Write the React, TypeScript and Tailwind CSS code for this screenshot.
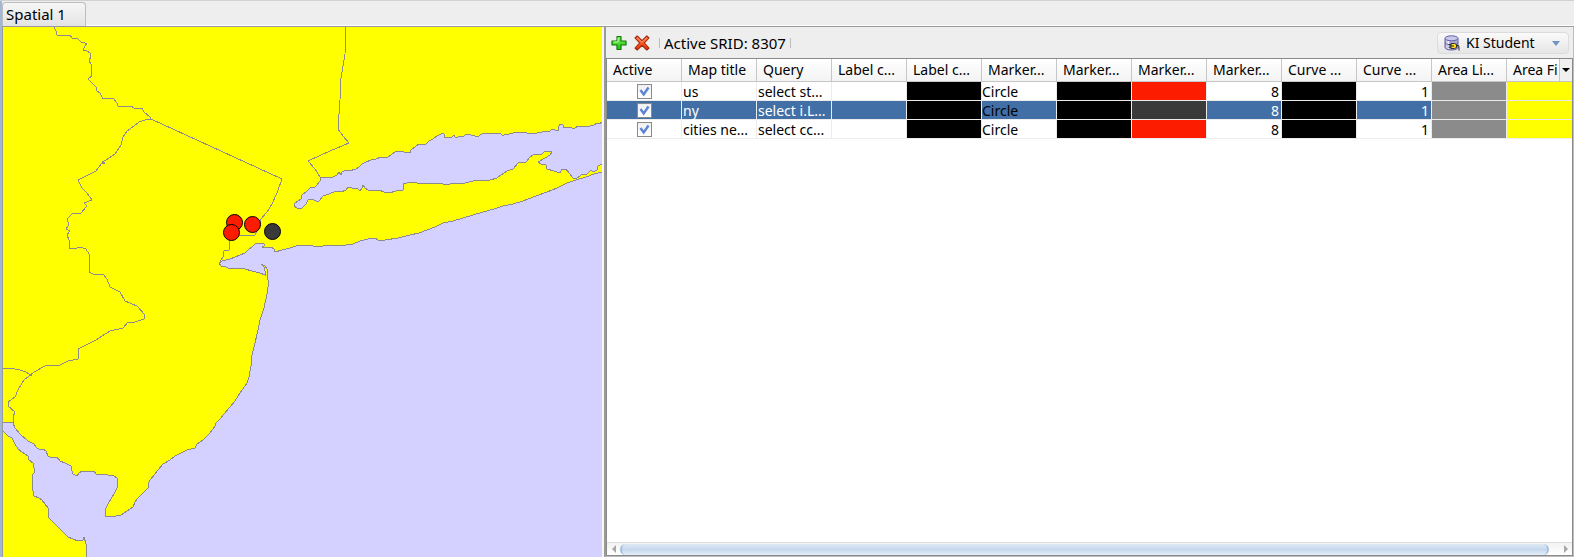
import { useState } from "react";

type Row = {
  title: string;
  query: string;
  markerFill: string;
};

const HEADERS = [
  "Active",
  "Map title",
  "Query",
  "Label c...",
  "Label c...",
  "Marker...",
  "Marker...",
  "Marker...",
  "Marker...",
  "Curve ...",
  "Curve ...",
  "Area Li...",
  "Area Fi",
];

const ROWS: Row[] = [
  { title: "us", query: "select st...", markerFill: "bg-[#fc1c00]" },
  { title: "ny", query: "select i.L...", markerFill: "bg-[#3a3a3a]" },
  { title: "cities ne...", query: "select cc...", markerFill: "bg-[#fc1c00]" },
];

const OCEAN =
  "610,169 602,172 594,174 586,177 576,180 567,183 557,188 547,192 536,196 523,201 513,204 503,206 494,209 483,212 473,215 463,218 453,221 443,223 435,227 427,230 419,233 410,235 398,238 385,240 378,240 375,238 368,239 360,241 353,244 340,246 334,245 323,246 313,246 303,245 296,246 290,248 282,250 275,252 274,249 271,247 267,248 262,247 264,246 264,244 261,243 256,243 252,247 248,250 245,253 240,255 230,259 222,261 219,263 221,266 226,267 230,269 233,268 239,268 245,269 252,271 260,273 265,275 265,271 264,267 261,264 265,266 267,269 268,280 268,287 267,294 264,308 260,320 258,330 255,343 252,355 251,366 249,377 247,383 240,393 235,401 230,407 224,414 220,419 216,423 215,426 210,433 203,440 197,444 195,448 187,450 181,453 175,456 170,460 163,464 158,470 155,474 150,480 148,484 148,488 143,493 138,498 135,502 133,507 127,511 121,515 116,516 111,517 105,516 106,508 109,502 114,494 117,488 117,478 114,476 108,475 96,474 94,471 89,471 82,471 79,473 77,476 73,474 72,471 71,466 65,463 60,461 57,457 53,457 52,458 48,456 46,451 43,449 41,450 37,448 34,444 28,441 20,434 15,428 13,423 11,422 0,422 0,429 4,432 8,436 12,438 15,444 18,449 22,452 28,456 29,460 33,463 34,468 35,472 32,475 32,485 34,496 39,498 42,500 48,508 48,517 56,525 68,537 73,539 78,541 83,540 84,537 86,544 87,557 87,1200 1200,1200 1200,169";

const SOUND =
  "610,120 602,122 599,124 597,123 594,125 590,126 585,126 578,126 575,128 572,128 568,127 563,128 563,125 560,124 559,126 558,131 555,130 552,129 550,131 547,131 537,133 533,133 528,134 526,132 519,132 516,132 513,133 509,134 508,135 505,134 503,136 501,134 495,133 485,133 482,134 480,135 478,137 475,136 474,135 472,136 470,134 468,135 466,134 464,136 459,136 458,137 455,137 454,135 452,137 447,138 444,137 445,135 443,133 441,134 437,136 433,139 429,141 426,144 419,144 415,147 411,150 410,153 404,152 398,151 395,152 391,155 388,157 381,157 376,159 371,160 366,162 362,164 359,167 356,169 349,171 346,170 342,172 341,175 339,172 337,175 333,177 326,177 321,178 320,181 317,185 315,187 311,187 307,191 302,195 301,199 298,201 295,203 294,206 297,208 302,208 306,204 308,200 312,199 316,201 319,201 323,196 329,194 336,191 341,192 346,190 348,187 352,188 358,189 360,191 362,188 363,185 365,188 368,190 379,190 384,192 389,193 396,191 403,190 403,184 407,183 410,182 417,183 430,183 443,184 450,184 465,183 473,181 478,180 483,181 490,180 497,178 501,175 507,171 513,169 518,163 526,162 530,157 535,154 541,155 545,151 552,152 550,155 545,158 538,162 541,164 546,165 547,169 554,171 560,173 562,169 566,169 569,173 573,178 576,179 580,176 582,174 587,174 591,170 593,172 597,170 598,166 602,164 610,162";

const BORDERS = [
  "346,27 345,54 341,78 340,100 338,129 343,136 349,143 330,151 319,156 308,161 315,169 320,177 320,180",
  "54,27 56,31 57,35 62,36 65,35 70,35 72,38 78,39 81,42 85,43 87,43 85,46 83,50 87,51 90,53 91,56 89,61 91,64 92,76 88,79 92,83 96,87 97,91 100,93 103,99 113,98 117,103 118,106 126,107 131,106 134,108 142,108 144,112 150,117 151,119 282,179 277,193 272,204 267,212 261,219 260,226 255,235 240,235 238,237 230,240 229,250 224,251 223,257 220,262",
  "151,119 145,120 139,122 134,126 127,131 123,137 121,145 115,154 106,160 102,162 105,163 101,164 96,171 88,175 78,180 82,188 87,193 92,200 84,203 87,206 81,213 72,214 67,219 69,225 66,229 70,231 67,235 69,240 69,248 74,249 80,247 86,249 89,254 89,272 95,275 103,274 107,279 110,287 120,292 125,301 137,306 145,315 144,319 135,322 128,322 123,328 110,331 102,336 96,340 88,344 78,349 78,359 68,361 60,365 45,366 34,372 24,380 18,390 15,397 8,402 8,406 15,412 13,417 14,423",
  "0,368 10,368 20,370 26,372 32,376",
];

const MARKERS = [
  { x: 234, y: 222, fill: "#fc1c00" },
  { x: 252, y: 224, fill: "#fc1c00" },
  { x: 231, y: 232, fill: "#fc1c00" },
  { x: 272, y: 231, fill: "#3a3a3a" },
];

function SpatialMap() {
  return (
    <svg
      role="img"
      aria-label="Map"
      className="block h-full w-full bg-[#ffff00]"
      viewBox="3 27 599 530"
      preserveAspectRatio="xMinYMin slice"
    >
      <g stroke="#8c8c8c" strokeWidth="1" shapeRendering="crispEdges">
        <g fill="#d4d0ff">
          <polygon points={OCEAN} />
          <polygon points={SOUND} />
        </g>
        <g fill="none">
          {BORDERS.map((points) => (
            <polyline key={points} points={points} />
          ))}
        </g>
      </g>
      {MARKERS.map((m) => (
        <circle key={`${m.x}-${m.y}`} cx={m.x + 0.5} cy={m.y + 0.5} r="8" fill={m.fill} stroke="#000" strokeWidth="1" />
      ))}
    </svg>
  );
}

function AddIcon() {
  return (
    <svg viewBox="0 0 16 16" className="size-4" aria-hidden="true">
      <defs>
        <linearGradient id="add" x1="0" y1="0" x2="0" y2="1">
          <stop offset="0" stopColor="#7df05a" />
          <stop offset="1" stopColor="#1fc012" />
        </linearGradient>
      </defs>
      <path
        d="M6 1.5h4V6h5v4h-5v4.5H6V10H1V6h5z"
        fill="url(#add)"
        stroke="#0d7a0b"
        strokeWidth="1.2"
        strokeLinejoin="round"
      />
      <path d="M7 3v4H2.500" fill="none" stroke="#c4ffae" strokeWidth="1" />
    </svg>
  );
}

function RemoveIcon() {
  return (
    <svg viewBox="0 0 16 16" className="size-4" aria-hidden="true">
      <defs>
        <linearGradient id="remove" x1="0" y1="0" x2="0" y2="1">
          <stop offset="0" stopColor="#ff7a40" />
          <stop offset="1" stopColor="#ee3408" />
        </linearGradient>
      </defs>
      <path
        d="M3.200 1 8 5.700 12.800 1 15 3 10.400 8 15 13 12.800 15 8 10.300 3.200 15 1 13 5.600 8 1 3z"
        fill="url(#remove)"
        stroke="#a02408"
        strokeWidth="1.1"
        strokeLinejoin="round"
      />
      <path d="M3.200 2.600 8 7.200l4.800-4.600" fill="none" stroke="#ffb08a" strokeWidth="0.7" />
    </svg>
  );
}

function DatabaseIcon() {
  return (
    <svg viewBox="0 0 16 16" className="size-4" aria-hidden="true">
      <path d="M1 3.500v9c0 1.500 3 2.500 6.500 2.500s6.500-1 6.500-2.500v-9z" fill="#a9a9d8" stroke="#6464a4" />
      <path d="M3 5v8.500M4.500 5.500V14" stroke="#f4f4ff" />
      <path d="M1 7.500c0 1.500 3 2.300 6.500 2.300S14 9 14 7.500" fill="none" stroke="#6a6aa8" />
      <ellipse cx="7.500" cy="3.300" rx="6.500" ry="2.500" fill="#c9c9ec" stroke="#6464a4" />
      <path d="M7 8.500h3.500l2 1v3l-2 1H7z" fill="#ffd829" stroke="#222" strokeWidth="0.9" />
      <path d="M4.500 9.800H7M4.500 12.200H7M7 11h3M12.500 10.500h1.500c1 0 1 1.500 1 5" fill="none" stroke="#222" strokeWidth="1" />
    </svg>
  );
}

function ActiveBox({ title }: { title: string }) {
  const [on, setOn] = useState(true);
  return (
    <label className="relative mx-auto block size-[15px]">
      <input
        type="checkbox"
        aria-label={`Show ${title}`}
        checked={on}
        onChange={() => setOn(!on)}
        className="block size-[15px] appearance-none border border-[#8a8a8a] bg-gradient-to-b from-[#f0f0f0] to-white"
      />
      {on && (
        <svg viewBox="0 0 15 15" className="pointer-events-none absolute inset-0 size-[15px]" aria-hidden="true">
          <path d="M3.500 6 6.700 10.500 11.500 3.500" fill="none" stroke="#5b83d6" strokeWidth="2.400" />
        </svg>
      )}
    </label>
  );
}

const CELL = "h-[19px] border-r border-b border-[#ececec] p-0";
const TEXT_CELL = "h-[19px] border-r border-b border-[#ececec] p-0 pt-0.5";

function LayerTable() {
  const [selected, setSelected] = useState(1);
  return (
    <table className="w-[975px] table-fixed border-separate border-spacing-0 text-sm leading-4 whitespace-nowrap">
      <thead>
        <tr>
          {HEADERS.map((h, i) => (
            <th
              key={i}
              scope="col"
              className="h-[23px] border-r border-b border-[#c6c6c6] bg-gradient-to-b from-white to-[#f3f3f3] p-0 pl-1.5 text-left font-normal"
            >
              {h}
            </th>
          ))}
        </tr>
      </thead>
      <tbody>
        {ROWS.map((r, i) => {
          const on = i === selected;
          const bg = on ? "bg-[#426fa6]" : "bg-white";
          const text = on ? "bg-[#426fa6] text-white" : "bg-white";
          return (
            <tr key={r.title} onClick={() => setSelected(i)}>
              <td className={`${CELL} ${bg}`}>
                <ActiveBox title={r.title} />
              </td>
              <td className={`${TEXT_CELL} ${text} pl-px`}>{r.title}</td>
              <td className={`${TEXT_CELL} ${text} pl-px`}>{r.query}</td>
              <td className={`${CELL} ${bg}`} />
              <td className={`${CELL} bg-black`} />
              <td className={`${TEXT_CELL} ${bg}`}>Circle</td>
              <td className={`${CELL} bg-black`} />
              <td className={`${CELL} ${r.markerFill}`} />
              <td className={`${TEXT_CELL} ${text} pr-0.5 text-right`}>8</td>
              <td className={`${CELL} bg-black`} />
              <td className={`${TEXT_CELL} ${text} pr-0.5 text-right`}>1</td>
              <td className={`${CELL} bg-[#8b8b8b]`} />
              <td className={`${CELL} bg-[#ffff00]`} />
            </tr>
          );
        })}
      </tbody>
    </table>
  );
}

export default function App() {
  return (
    <div className="flex h-screen flex-col overflow-hidden border-t border-[#d2d2d2] bg-[#eeeeee] font-['Noto_Sans','Open_Sans',sans-serif] text-sm text-black">
      <div className="flex min-h-0 flex-1">
        <div className="w-0.5 shrink-0 bg-[#a0b8d6]" />
        <div className="flex min-w-0 flex-1 flex-col">
          <div role="tablist" className="flex h-[26px] shrink-0 border-b border-[#9a9a9a] pt-px">
            <button
              role="tab"
              aria-selected="true"
              className="flex w-[84px] items-center rounded-t-sm border border-b-0 border-[#bdbdbd] bg-gradient-to-b from-[#f6f6f6] to-[#e4e4e4] pl-[3px] text-[15px]"
            >
              Spatial 1
            </button>
            <div className="flex-1 border-b border-white" />
          </div>
          <main className="grid min-h-0 flex-1 grid-cols-[602fr_970fr]">
            <section className="min-w-0 overflow-hidden border-r-2 border-l border-r-[#f6f6f6] border-l-[#9a9a9a]">
              <SpatialMap />
            </section>
            <section className="flex min-w-0 flex-col border-r border-b border-l-2 border-[#bcbcbc] border-l-[#9a9a9a]">
              <div className="flex h-[31px] shrink-0 items-center pt-px pr-1 pl-[5px]">
                <button aria-label="Add layer" className="mr-[7px]">
                  <AddIcon />
                </button>
                <button aria-label="Remove layer">
                  <RemoveIcon />
                </button>
                <span className="ml-[9px] border-x border-[#bdbdbd] px-1 text-[15px] leading-[10px]">Active SRID: 8307</span>
                <label className="relative ml-auto flex h-[22px] w-[132px] items-center rounded-sm border border-[#dcdcdc] bg-gradient-to-b from-[#fafafa] to-[#e6e6e6]">
                  <span className="pointer-events-none absolute left-1.5">
                    <DatabaseIcon />
                  </span>
                  <select aria-label="Connection" className="h-full w-full appearance-none bg-transparent pl-7 text-sm leading-5">
                    <option>KI Student</option>
                  </select>
                  <svg viewBox="0 0 8 5" className="pointer-events-none absolute right-2 h-[5px] w-2" aria-hidden="true">
                    <path d="M0 0h8L4 5z" fill="#6f93c8" />
                  </svg>
                </label>
              </div>
              <div className="flex min-h-0 flex-1 flex-col border border-[#8a8a8a] bg-white">
                <div className="relative min-h-0 flex-1 overflow-hidden">
                  <LayerTable />
                  <button
                    aria-label="Choose columns"
                    className="absolute top-0 right-0 flex h-[23px] w-[13px] items-center justify-center border-b border-l border-[#c6c6c6] bg-[#f0f0f0]"
                  >
                    <svg viewBox="0 0 8 4" className="h-1 w-2" aria-hidden="true">
                      <path d="M0 0h8L4 4z" fill="#000" />
                    </svg>
                  </button>
                </div>
                <div className="flex h-[13px] shrink-0 items-center border-t border-[#dedede] bg-gradient-to-b from-[#f2f2f2] to-white">
                  <button aria-label="Scroll left" className="flex w-[13px] justify-center">
                    <svg viewBox="0 0 4 8" className="h-2 w-1" aria-hidden="true">
                      <path d="M4 0v8L0 4z" fill="#a6a6a6" />
                    </svg>
                  </button>
                  <div className="h-[11px] flex-1 rounded-full border-x-2 border-[#a5bfe0] bg-gradient-to-b from-[#dfe9f5] via-[#c6d8ed] to-[#e4eef8]" />
                  <div className="w-2.5" />
                  <button aria-label="Scroll right" className="flex w-[13px] justify-center">
                    <svg viewBox="0 0 4 8" className="h-2 w-1" aria-hidden="true">
                      <path d="M0 0v8l4-4z" fill="#a6a6a6" />
                    </svg>
                  </button>
                </div>
              </div>
            </section>
          </main>
        </div>
      </div>
    </div>
  );
}
